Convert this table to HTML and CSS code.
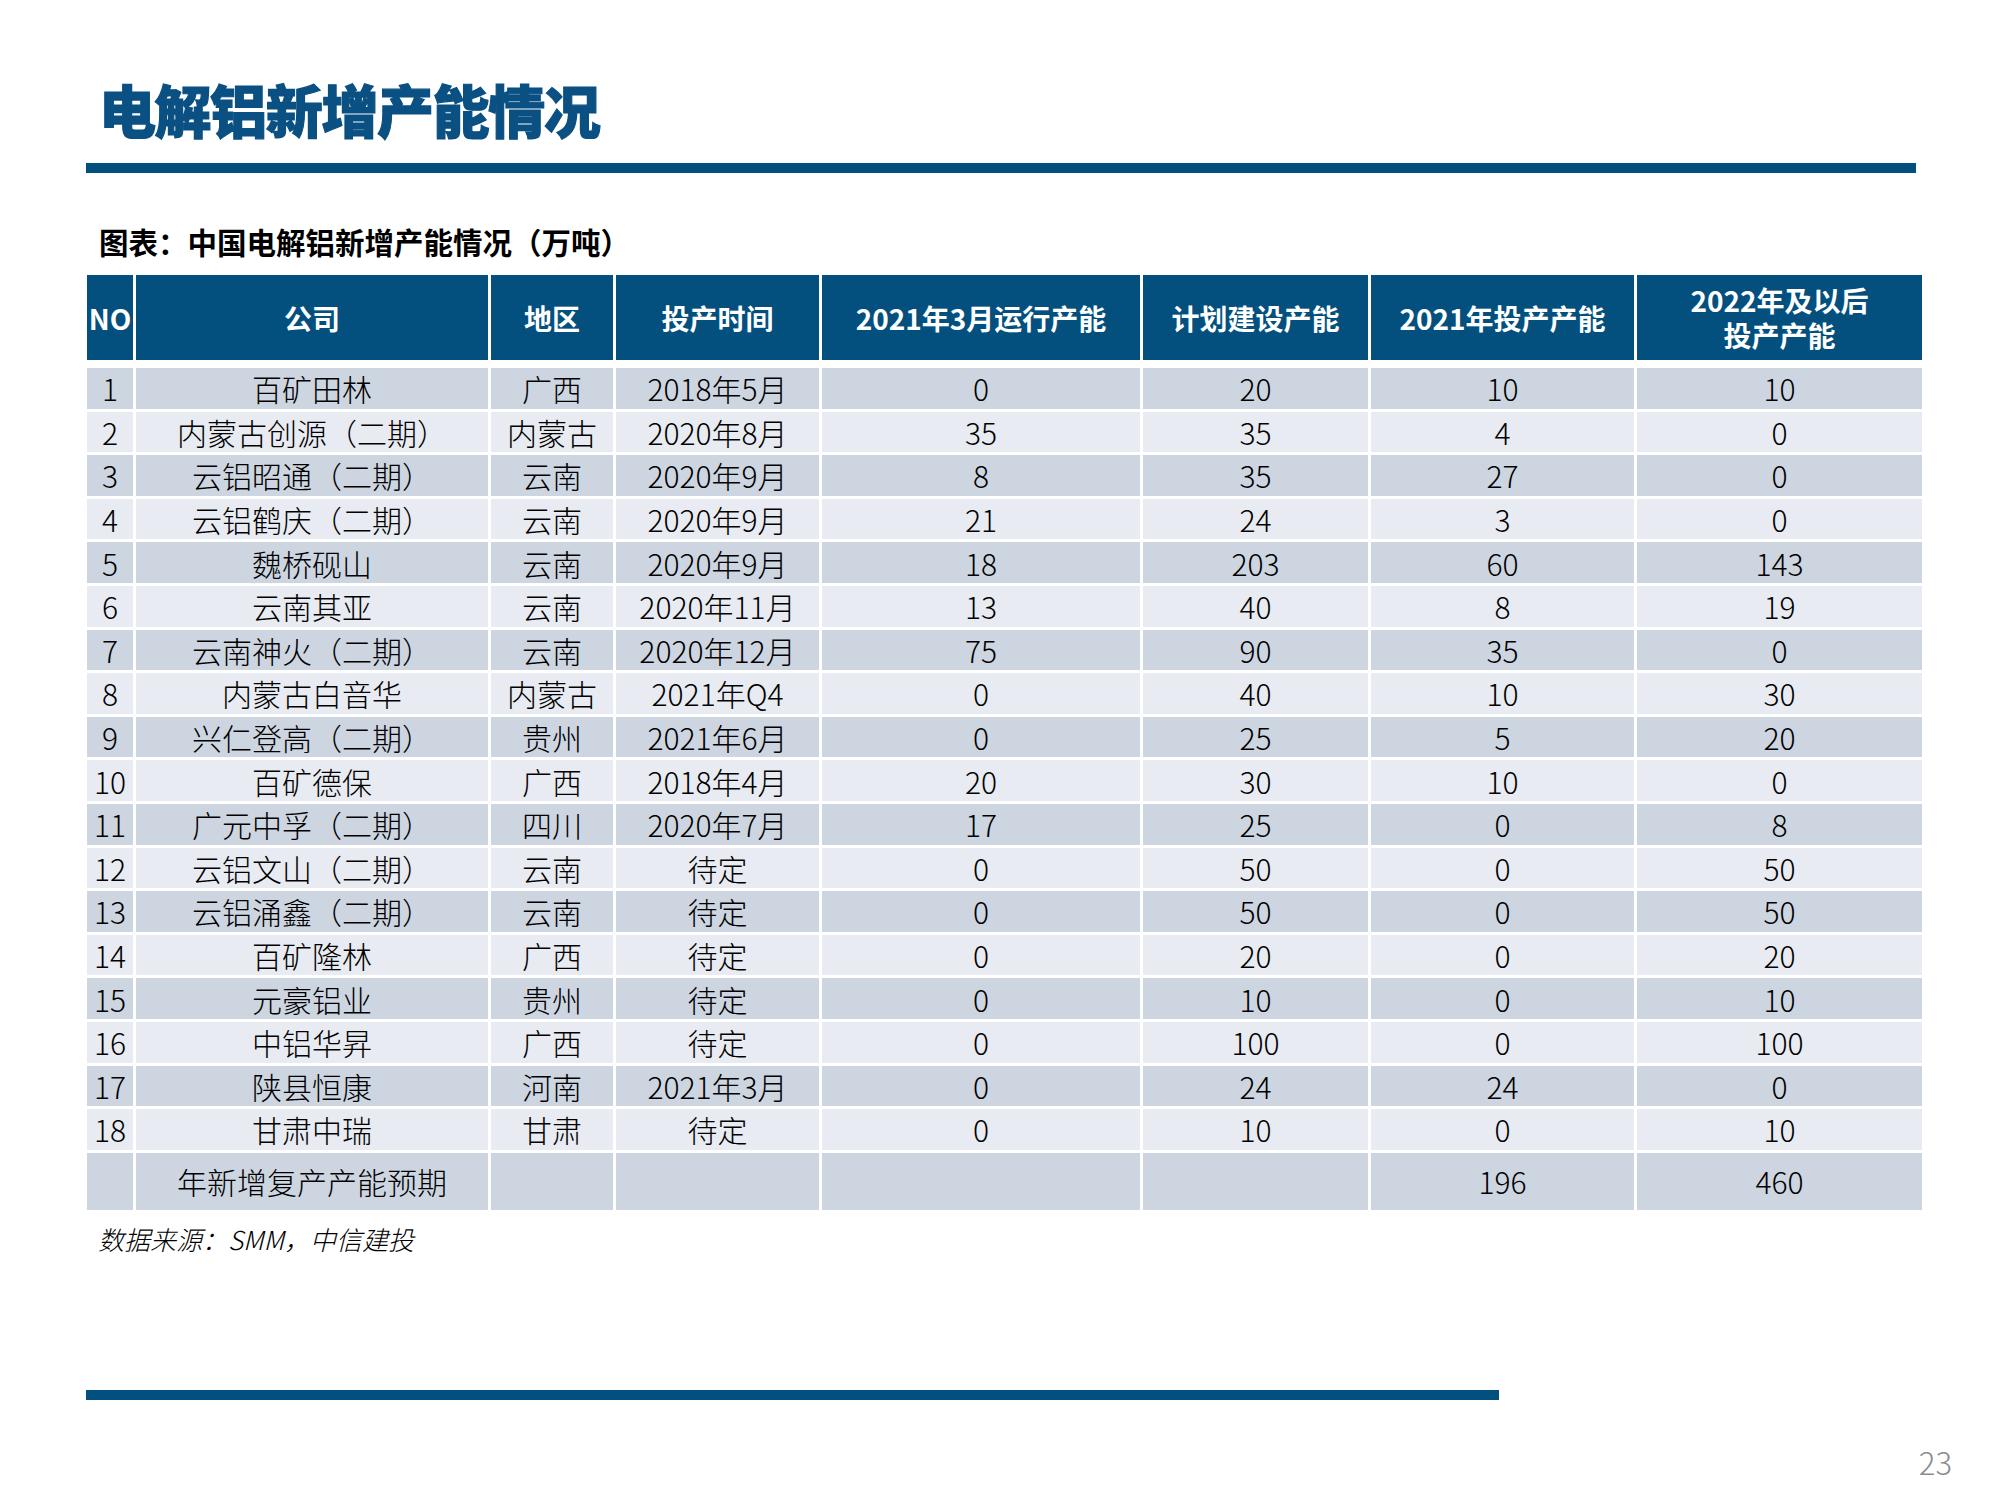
FILE: index.html
```html
<!DOCTYPE html>
<html lang="zh-CN">
<head>
<meta charset="utf-8">
<title>电解铝新增产能情况</title>
<link rel="stylesheet" href="styles.css">
</head>
<body>
<div class="page">
  <h1 class="title">电解铝新增产能情况</h1>
  <div class="rule rule-top"></div>
  <div class="subtitle">图表：中国电解铝新增产能情况（万吨）</div>
  <table class="data">
    <colgroup>
      <col class="c-no"><col class="c-co"><col class="c-reg"><col class="c-time">
      <col class="c-run"><col class="c-plan"><col class="c-2021"><col class="c-2022">
    </colgroup>
    <thead>
      <tr>
        <th>NO</th><th>公司</th><th>地区</th><th>投产时间</th>
        <th>2021年3月运行产能</th><th>计划建设产能</th><th>2021年投产产能</th>
        <th><span class="hl">2022年及以后</span><span class="hl">投产产能</span></th>
      </tr>
    </thead>
    <tbody>
      <tr><td>1</td><td>百矿田林</td><td>广西</td><td>2018年5月</td><td>0</td><td>20</td><td>10</td><td>10</td></tr>
      <tr><td>2</td><td>内蒙古创源（二期）</td><td>内蒙古</td><td>2020年8月</td><td>35</td><td>35</td><td>4</td><td>0</td></tr>
      <tr><td>3</td><td>云铝昭通（二期）</td><td>云南</td><td>2020年9月</td><td>8</td><td>35</td><td>27</td><td>0</td></tr>
      <tr><td>4</td><td>云铝鹤庆（二期）</td><td>云南</td><td>2020年9月</td><td>21</td><td>24</td><td>3</td><td>0</td></tr>
      <tr><td>5</td><td>魏桥砚山</td><td>云南</td><td>2020年9月</td><td>18</td><td>203</td><td>60</td><td>143</td></tr>
      <tr><td>6</td><td>云南其亚</td><td>云南</td><td>2020年11月</td><td>13</td><td>40</td><td>8</td><td>19</td></tr>
      <tr><td>7</td><td>云南神火（二期）</td><td>云南</td><td>2020年12月</td><td>75</td><td>90</td><td>35</td><td>0</td></tr>
      <tr><td>8</td><td>内蒙古白音华</td><td>内蒙古</td><td>2021年Q4</td><td>0</td><td>40</td><td>10</td><td>30</td></tr>
      <tr><td>9</td><td>兴仁登高（二期）</td><td>贵州</td><td>2021年6月</td><td>0</td><td>25</td><td>5</td><td>20</td></tr>
      <tr><td>10</td><td>百矿德保</td><td>广西</td><td>2018年4月</td><td>20</td><td>30</td><td>10</td><td>0</td></tr>
      <tr><td>11</td><td>广元中孚（二期）</td><td>四川</td><td>2020年7月</td><td>17</td><td>25</td><td>0</td><td>8</td></tr>
      <tr><td>12</td><td>云铝文山（二期）</td><td>云南</td><td>待定</td><td>0</td><td>50</td><td>0</td><td>50</td></tr>
      <tr><td>13</td><td>云铝涌鑫（二期）</td><td>云南</td><td>待定</td><td>0</td><td>50</td><td>0</td><td>50</td></tr>
      <tr><td>14</td><td>百矿隆林</td><td>广西</td><td>待定</td><td>0</td><td>20</td><td>0</td><td>20</td></tr>
      <tr><td>15</td><td>元豪铝业</td><td>贵州</td><td>待定</td><td>0</td><td>10</td><td>0</td><td>10</td></tr>
      <tr><td>16</td><td>中铝华昇</td><td>广西</td><td>待定</td><td>0</td><td>100</td><td>0</td><td>100</td></tr>
      <tr><td>17</td><td>陕县恒康</td><td>河南</td><td>2021年3月</td><td>0</td><td>24</td><td>24</td><td>0</td></tr>
      <tr><td>18</td><td>甘肃中瑞</td><td>甘肃</td><td>待定</td><td>0</td><td>10</td><td>0</td><td>10</td></tr>
      <tr class="total"><td></td><td>年新增复产产能预期</td><td></td><td></td><td></td><td></td><td>196</td><td>460</td></tr>
    </tbody>
  </table>
  <div class="source">数据来源：SMM，中信建投</div>
  <div class="rule rule-bottom"></div>
  <div class="footer"><span class="pageno">23</span></div>
</div>
</body>
</html>
```
FILE: styles.css
```css
html, body {
  margin: 0;
  padding: 0;
  background: #ffffff;
}

body {
  font-family: "Noto Sans CJK SC", "Noto Sans", sans-serif;
  color: #000000;
}

.page {
  width: 2000px;
  height: 1500px;
  padding-left: 86px;
  box-sizing: border-box;
}

.title {
  margin: 0;
  padding: 80px 0 0 13px;
  font-size: 57px;
  line-height: 57px;
  font-weight: 900;
  color: #0a5082;
  letter-spacing: -1.4px;
  -webkit-text-stroke: 1.2px #0a5082;
}

.rule {
  background: #03507f;
  height: 10px;
}

.rule-top {
  margin-top: 26px;
  width: 1830px;
}

.subtitle {
  margin-top: 54px;
  padding-left: 13px;
  font-size: 29.5px;
  line-height: 29px;
  font-weight: 700;
  color: #000000;
}

.data {
  margin-top: 16px;
  margin-left: -2px;
  width: 1841px;
  table-layout: fixed;
  border-collapse: separate;
  border-spacing: 3px;
  font-size: 30px;
}

.c-no { width: 46px; }
.c-co { width: 352px; }
.c-reg { width: 122px; }
.c-time { width: 203px; }
.c-run { width: 318px; }
.c-plan { width: 225px; }
.c-2021 { width: 263px; }
.c-2022 { width: 285px; }

.data th {
  background: #03507f;
  background-clip: padding-box;
  border-bottom: 5px solid #ffffff;
  color: #ffffff;
  font-size: 28px;
  font-weight: 700;
  height: 85px;
  padding: 0;
  line-height: 34px;
  text-align: center;
  vertical-align: middle;
  white-space: nowrap;
}

.hl {
  display: block;
  line-height: 35px;
}

.data td {
  height: 40.6px;
  padding: 0;
  text-align: center;
  vertical-align: middle;
  font-weight: 300;
  line-height: 32px;
  white-space: nowrap;
}

.data tbody tr:nth-child(odd) td {
  background: #cdd5e1;
}

.data tbody tr:nth-child(even) td {
  background: #e8ebf1;
}

.data tbody tr.total td {
  background: #cdd5e1;
  height: 57px;
}

.source {
  margin-top: 13px;
  padding-left: 12px;
  font-size: 26px;
  line-height: 26px;
  font-style: italic;
  font-weight: 300;
}

.rule-bottom {
  margin-top: 138px;
  width: 1413px;
}

.footer {
  display: flex;
  justify-content: flex-end;
  padding-right: 48px;
  margin-top: 46px;
}

.pageno {
  font-size: 31px;
  line-height: 31px;
  color: #8c8c8c;
  font-weight: 300;
}
```
